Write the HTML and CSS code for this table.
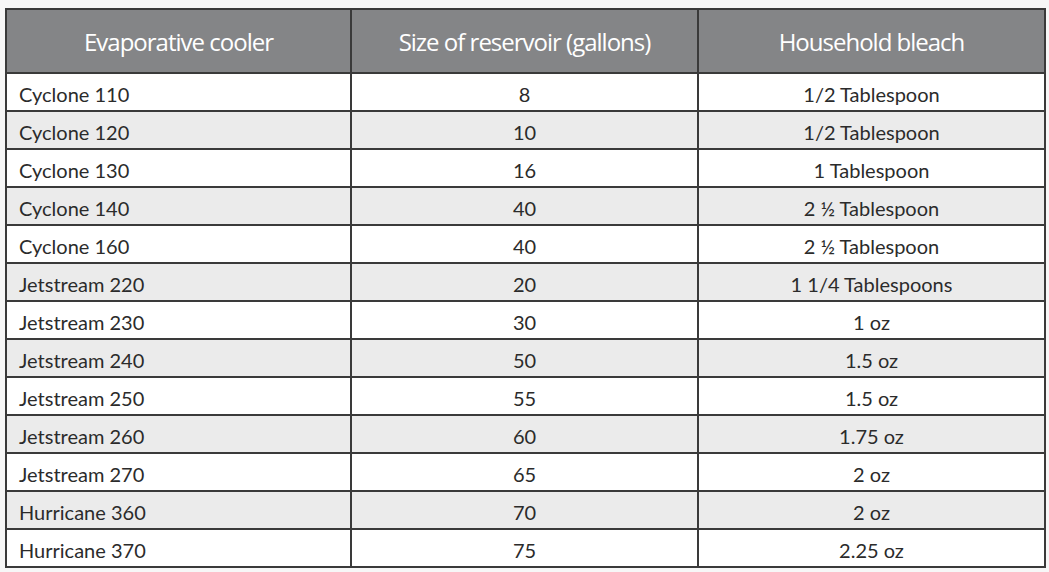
FILE: index.html
```html
<!DOCTYPE html>
<html>
<head>
<meta charset="utf-8">
<link rel="stylesheet" href="styles.css">
</head>
<body>
<div class="page">
<table class="bleach">
<thead>
<tr><th class="c1">Evaporative cooler</th><th class="c2">Size of reservoir (gallons)</th><th class="c3">Household bleach</th></tr>
</thead>
<tbody>
<tr><td class="name">Cyclone 110</td><td>8</td><td>1/2 Tablespoon</td></tr>
<tr class="alt"><td class="name">Cyclone 120</td><td>10</td><td>1/2 Tablespoon</td></tr>
<tr><td class="name">Cyclone 130</td><td>16</td><td>1 Tablespoon</td></tr>
<tr class="alt"><td class="name">Cyclone 140</td><td>40</td><td>2 ½ Tablespoon</td></tr>
<tr><td class="name">Cyclone 160</td><td>40</td><td>2 ½ Tablespoon</td></tr>
<tr class="alt"><td class="name">Jetstream 220</td><td>20</td><td>1 1/4 Tablespoons</td></tr>
<tr><td class="name">Jetstream 230</td><td>30</td><td>1 oz</td></tr>
<tr class="alt"><td class="name">Jetstream 240</td><td>50</td><td>1.5 oz</td></tr>
<tr><td class="name">Jetstream 250</td><td>55</td><td>1.5 oz</td></tr>
<tr class="alt"><td class="name">Jetstream 260</td><td>60</td><td>1.75 oz</td></tr>
<tr><td class="name">Jetstream 270</td><td>65</td><td>2 oz</td></tr>
<tr class="alt"><td class="name">Hurricane 360</td><td>70</td><td>2 oz</td></tr>
<tr><td class="name">Hurricane 370</td><td>75</td><td>2.25 oz</td></tr>
</tbody>
</table>
</div>
</body>
</html>
```
FILE: styles.css
```css
html, body {
  margin: 0;
  padding: 0;
  background: #f7f7f7;
}
.page {
  padding: 8px 0 0 5px;
}
.bleach {
  border-collapse: collapse;
  width: 1039px;
  table-layout: fixed;
  font-family: Lato, "Open Sans", sans-serif;
  color: #2b2b2b;
}
.bleach th, .bleach td {
  border: 2px solid #3a3a3a;
  padding: 0;
}
.bleach th {
  background: #848587;
  color: #fff;
  height: 62px;
  font-family: "Open Sans", sans-serif;
  font-weight: 400;
  font-size: 24px;
  letter-spacing: -1px;
  text-align: center;
  padding-top: 0;
}
.c1 { width: 343px; }
.c2 { width: 345px; }
.c3 { width: 345px; }
.bleach td {
  height: 38px;
  font-size: 20px;
  text-align: center;
  background: #fff;
  padding-top: 4px;
  box-sizing: border-box;
}
.bleach tr.alt td {
  background: #ebebeb;
}
.bleach td.name {
  text-align: left;
  padding-left: 12px;
}
```
